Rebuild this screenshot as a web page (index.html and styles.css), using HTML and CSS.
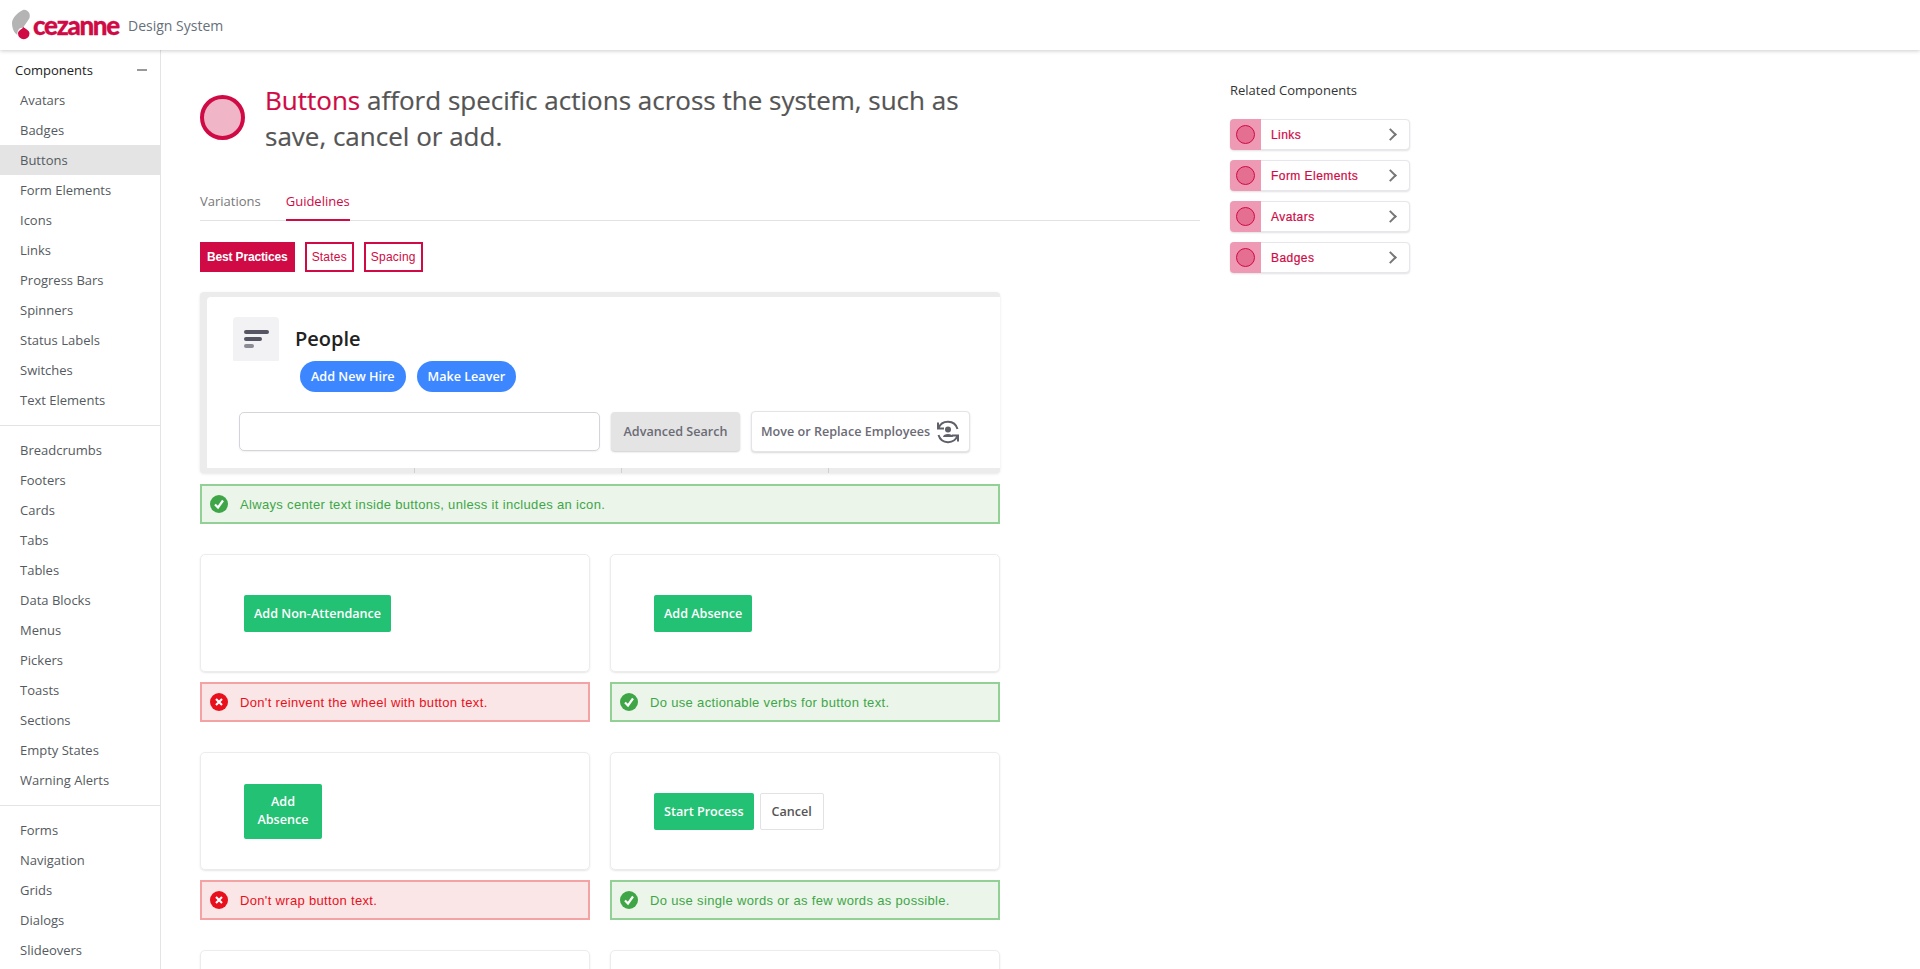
FILE: index.html
```html
<!DOCTYPE html>
<html>
<head>
<title>Buttons - Cezanne Design System</title>
<link rel="stylesheet" href="styles.css">
</head>
<body>
<header class="topbar">
  <svg class="logo-mark" width="22" height="34" viewBox="10 6 22 34">
    <path d="M23 10 C27 9 31 13 29.500 18 C28 21 25 24 23 28 C20 27 17 30 17.500 35 C14 33 12 28 12 23 C12 18 18 12 23 10 Z" fill="#b4b4b4"/>
    <path d="M23.500 27 C25 29 29.500 30 29.500 33.500 A5.700 5.700 0 0 1 18 33.500 C18 30.500 22 29.500 23.500 27 Z" fill="#cf0a45"/>
  </svg>
  <span class="logo-word">cezanne</span>
  <span class="logo-sub">Design System</span>
</header>

<div class="layout">
  <nav class="sidebar">
    <div class="side-head"><span>Components</span><i class="minus"></i></div>
    <ul class="side-group">
      <li>Avatars</li>
      <li>Badges</li>
      <li class="active">Buttons</li>
      <li>Form Elements</li>
      <li>Icons</li>
      <li>Links</li>
      <li>Progress Bars</li>
      <li>Spinners</li>
      <li>Status Labels</li>
      <li>Switches</li>
      <li>Text Elements</li>
    </ul>
    <ul class="side-group">
      <li>Breadcrumbs</li>
      <li>Footers</li>
      <li>Cards</li>
      <li>Tabs</li>
      <li>Tables</li>
      <li>Data Blocks</li>
      <li>Menus</li>
      <li>Pickers</li>
      <li>Toasts</li>
      <li>Sections</li>
      <li>Empty States</li>
      <li>Warning Alerts</li>
    </ul>
    <ul class="side-group">
      <li>Forms</li>
      <li>Navigation</li>
      <li>Grids</li>
      <li>Dialogs</li>
      <li>Slideovers</li>
    </ul>
  </nav>

  <main class="content">
    <div class="intro">
      <span class="intro-icon"></span>
      <h1><em>Buttons</em> afford specific actions across the system, such as save, cancel or add.</h1>
    </div>

    <div class="tabs">
      <a>Variations</a>
      <a class="on">Guidelines</a>
    </div>

    <div class="pills">
      <a class="pill solid">Best Practices</a>
      <a class="pill">States</a>
      <a class="pill">Spacing</a>
    </div>

    <div class="guide">
      <div class="demo-hero">
        <div class="hero-top">
          <span class="hero-icon">
            <svg width="26" height="22" viewBox="0 0 26 22">
              <rect x="1" y="1" width="25" height="4" rx="2" fill="#555564"/>
              <rect x="1" y="8" width="18" height="4" rx="2" fill="#555564"/>
              <rect x="1" y="15" width="10" height="4" rx="2" fill="#8b8b96"/>
            </svg>
          </span>
          <span class="hero-title">People</span>
        </div>
        <div class="hero-btns">
          <span class="blue-btn">Add New Hire</span>
          <span class="blue-btn">Make Leaver</span>
        </div>
        <div class="hero-search">
          <span class="search-box"></span>
          <span class="adv-btn">Advanced Search</span>
          <span class="move-btn">Move or Replace Employees
            <svg width="24" height="24" viewBox="0 0 24 24" fill="none" stroke="#5f6069" stroke-width="2">
              <path d="M2.500 8.500 A10 10 0 0 1 21.500 9"/>
              <path d="M2 2.500 V8.500 H8"/>
              <path d="M21.500 15.500 A10 10 0 0 1 2.500 15"/>
              <path d="M22 21.500 V15.500 H16"/>
              <circle cx="12" cy="9.500" r="3" fill="#5f6069" stroke="none"/>
              <path d="M7 17 C7 13 17 13 17 17 Z" fill="#5f6069" stroke="none"/>
            </svg>
          </span>
        </div>
        <div class="hero-foot"><i></i><i></i><i></i></div>
      </div>
      <div class="note good">
        <svg class="note-icon" width="18" height="18" viewBox="0 0 18 18"><circle cx="9" cy="9" r="9" fill="#3fa648"/><path d="M5 9.500 L8 12.500 L13 5.500" fill="none" stroke="#fff" stroke-width="2.200"/></svg>
        Always center text inside buttons, unless it includes an icon.
      </div>
    </div>

    <div class="guide-grid">
      <div class="guide-cell">
        <div class="card"><span class="green-btn">Add Non-Attendance</span></div>
        <div class="note bad">
          <svg class="note-icon" width="18" height="18" viewBox="0 0 18 18"><circle cx="9" cy="9" r="9" fill="#e8101c"/><path d="M6 6 L12 12 M12 6 L6 12" fill="none" stroke="#fff" stroke-width="2.200"/></svg>
          Don't reinvent the wheel with button text.
        </div>
      </div>
      <div class="guide-cell">
        <div class="card"><span class="green-btn">Add Absence</span></div>
        <div class="note good">
          <svg class="note-icon" width="18" height="18" viewBox="0 0 18 18"><circle cx="9" cy="9" r="9" fill="#3fa648"/><path d="M5 9.500 L8 12.500 L13 5.500" fill="none" stroke="#fff" stroke-width="2.200"/></svg>
          Do use actionable verbs for button text.
        </div>
      </div>
      <div class="guide-cell">
        <div class="card"><span class="green-btn wrapped">Add Absence</span></div>
        <div class="note bad">
          <svg class="note-icon" width="18" height="18" viewBox="0 0 18 18"><circle cx="9" cy="9" r="9" fill="#e8101c"/><path d="M6 6 L12 12 M12 6 L6 12" fill="none" stroke="#fff" stroke-width="2.200"/></svg>
          Don't wrap button text.
        </div>
      </div>
      <div class="guide-cell">
        <div class="card"><span class="green-btn">Start Process</span><span class="white-btn">Cancel</span></div>
        <div class="note good">
          <svg class="note-icon" width="18" height="18" viewBox="0 0 18 18"><circle cx="9" cy="9" r="9" fill="#3fa648"/><path d="M5 9.500 L8 12.500 L13 5.500" fill="none" stroke="#fff" stroke-width="2.200"/></svg>
          Do use single words or as few words as possible.
        </div>
      </div>
      <div class="guide-cell"><div class="card"></div></div>
      <div class="guide-cell"><div class="card"></div></div>
    </div>
  </main>

  <aside class="related">
    <h3>Related Components</h3>
    <a class="rel"><span class="rel-icon"><i></i></span><span class="rel-name">Links</span><b class="chev"></b></a>
    <a class="rel"><span class="rel-icon"><i></i></span><span class="rel-name">Form Elements</span><b class="chev"></b></a>
    <a class="rel"><span class="rel-icon"><i></i></span><span class="rel-name">Avatars</span><b class="chev"></b></a>
    <a class="rel"><span class="rel-icon"><i></i></span><span class="rel-name">Badges</span><b class="chev"></b></a>
  </aside>
</div>
</body>
</html>
```

FILE: styles.css
```css
*{
box-sizing:border-box;
}
html,body{
height:100%;
}
body{
margin:0;
font-family:"Open Sans",sans-serif;
color:#555;
background:#fff;
overflow:hidden;
}
.topbar{
height:50px;
display:flex;
align-items:center;
background:#fff;
box-shadow:0 1px 4px rgba(0,0,0,0.2);
position:relative;
}
.logo-mark{
margin:0 1px 4px 10px;
}
.logo-word{
width:85px;
font-family:"Lato",sans-serif;
font-weight:900;
font-size:26px;
line-height:30px;
color:#cf0a45;
letter-spacing:-1.3px;
-webkit-text-stroke:0.3px #cf0a45;
}
.logo-sub{
margin-left:10px;
font-size:14px;
color:#66707a;
}
.layout{
display:flex;
height:919px;
overflow:hidden;
}
.sidebar{
width:161px;
flex:none;
border-right:1px solid #e4e4e4;
overflow:hidden;
font-size:13px;
padding-top:5px;
}
.side-head{
height:30px;
display:flex;
align-items:center;
justify-content:space-between;
padding:0 13px 0 15px;
color:#222;
font-size:13px;
}
.minus{
width:10px;
height:2px;
background:#999;
}
.side-group{
list-style:none;
margin:0;
padding:0 0 10px;
border-bottom:1px solid #e4e4e4;
}
.side-group + .side-group{
padding-top:9px;
}
.side-group:last-child{
border-bottom:none;
}
.side-group li{
height:30px;
line-height:30px;
padding-left:20px;
color:#555a60;
}
.side-group li.active{
background:#e4e4e4;
}
.content{
width:1069px;
height:919px;
overflow:hidden;
flex:none;
padding:32px 30px 0 39px;
}
.intro{
display:flex;
width:790px;
height:76px;
}
.intro-icon{
width:45px;
height:45px;
margin-top:13px;
flex:none;
border-radius:50%;
border:4px solid #cf0a45;
background:#f0b5c7;
}
h1{
margin:0 0 0 20px;
font-size:26px;
font-weight:400;
line-height:36px;
color:#555;
-webkit-text-stroke:0.2px;
}
h1 em{
font-style:normal;
color:#cf0a45;
}
.tabs{
display:flex;
gap:25px;
margin-top:33px;
height:30px;
border-bottom:1px solid #e2e2e2;
font-size:13px;
line-height:21px;
}
.tabs a{
color:#777;
height:30px;
}
.tabs a.on{
color:#cf0a45;
font-weight:500;
border-bottom:2px solid #cf0a45;
}
.pills{
display:flex;
gap:10px;
margin-top:21px;
}
.pill{
height:30px;
padding:0 5px;
line-height:26px;
border:2px solid #cf0a45;
color:#cf0a45;
font-family:"Liberation Sans",sans-serif;
font-size:12px;
letter-spacing:0.2px;
}
.pill.solid{
background:#cf0a45;
color:#fff;
font-weight:700;
letter-spacing:-0.15px;
}
.guide{
width:800px;
margin-top:20px;
}
.demo-hero{
height:181px;
padding:5px 0 5px 7px;
background:#ececec;
border-radius:4px;
box-shadow:0 1px 3px rgba(0,0,0,0.1);
display:flex;
flex-direction:column;
}
.hero-top{
background:#fff;
padding:20px 0 0 26px;
display:flex;
align-items:flex-start;
height:64px;
flex:none;
border-top-left-radius:4px;
}
.hero-icon{
width:46px;
height:46px;
flex:none;
display:flex;
align-items:center;
justify-content:center;
background:#f2f2f4;
border-radius:4px;
}
.hero-title{
margin-left:16px;
font-size:20px;
font-weight:600;
line-height:44px;
color:#222;
}
.hero-btns{
background:#fff;
display:flex;
gap:11px;
padding:0 0 0 93px;
height:50px;
flex:none;
}
.blue-btn{
height:31px;
padding:0 11px;
border-radius:16px;
background:#3c87ff;
color:#fff;
font-size:12.6px;
font-weight:600;
line-height:31px;
}
.hero-search{
flex:1;
background:#fff;
display:flex;
gap:11px;
padding:0 0 0 32px;
}
.search-box{
width:361px;
height:39px;
margin-top:1px;
border:1px solid #d4d4da;
border-radius:5px;
box-shadow:0 1px 2px rgba(0,0,0,0.06);
}
.adv-btn{
width:129px;
height:39px;
margin-top:1px;
background:#e4e4e4;
border-radius:4px;
box-shadow:0 1px 2px rgba(0,0,0,0.2);
color:#6b6b76;
font-size:12.6px;
font-weight:600;
text-align:center;
line-height:39px;
}
.move-btn{
width:219px;
height:41px;
display:flex;
align-items:center;
justify-content:space-between;
padding:0 9px;
background:#fff;
border:1px solid #e4e4e8;
border-radius:4px;
box-shadow:0 1px 2px rgba(0,0,0,0.15);
color:#6b6b76;
font-size:12.6px;
font-weight:600;
}
.hero-foot{
display:flex;
height:0;
padding-left:1px;
}
.hero-foot i{
display:block;
width:207px;
height:5px;
flex:none;
border-right:1px solid #d0d0d0;
}
.note{
display:flex;
align-items:center;
gap:12px;
height:40px;
padding:0 0 0 8px;
font-family:"Liberation Sans",sans-serif;
font-size:13px;
border:2px solid;
letter-spacing:0.33px;
margin-top:10px;
}
.guide > .note{
margin-top:11px;
}
.note.good{
background:#ebf5ea;
border-color:#93d095;
color:#3fa648;
}
.note.bad{
background:#fae6e6;
border-color:#f4a3a4;
color:#e8101c;
}
.note-icon{
flex:none;
}
.guide-grid{
display:grid;
grid-template-columns:390px 390px;
column-gap:20px;
row-gap:30px;
width:800px;
margin-top:30px;
}
.card{
height:118px;
display:flex;
align-items:center;
gap:6px;
padding-left:43px;
border:1px solid #ececec;
border-radius:5px;
box-shadow:0 1px 2px rgba(0,0,0,0.1);
}
.green-btn{
height:37px;
padding:0 10px;
line-height:37px;
background:#22c174;
color:#fff;
font-size:12.6px;
font-weight:600;
border-radius:2px;
}
.green-btn.wrapped{
width:78px;
height:55px;
line-height:18px;
padding:9px 8px;
text-align:center;
}
.white-btn{
height:37px;
padding:0 11px;
line-height:35px;
border:1px solid #e2e2e2;
border-radius:2px;
color:#555;
font-size:12.6px;
font-weight:600;
}
.related{
padding:31px 0 0 0;
width:180px;
}
.related h3{
margin:0 0 20px;
font-size:13px;
font-weight:400;
line-height:18px;
color:#333;
}
.rel{
display:flex;
align-items:center;
height:31px;
margin-bottom:10px;
background:#fff;
border:1px solid #e6e6ec;
border-radius:4px;
box-shadow:0 1px 2px rgba(0,0,0,0.12);
}
.rel-icon{
width:31px;
height:31px;
margin-left:-1px;
flex:none;
display:flex;
align-items:center;
justify-content:center;
background:#ee9ab4;
border-radius:4px 0 0 4px;
}
.rel-icon i{
width:19px;
height:19px;
border-radius:50%;
border:1.500px solid #cf0a45;
background:#e56f91;
}
.rel-name{
flex:1;
margin-left:10px;
font-family:"Liberation Sans",sans-serif;
font-size:12px;
letter-spacing:0.45px;
color:#cf0a45;
-webkit-text-stroke:0.2px #cf0a45;
}
.chev{
width:9px;
height:9px;
margin-right:14px;
border-top:2px solid #777;
border-right:2px solid #777;
transform:rotate(45deg);
}
```
